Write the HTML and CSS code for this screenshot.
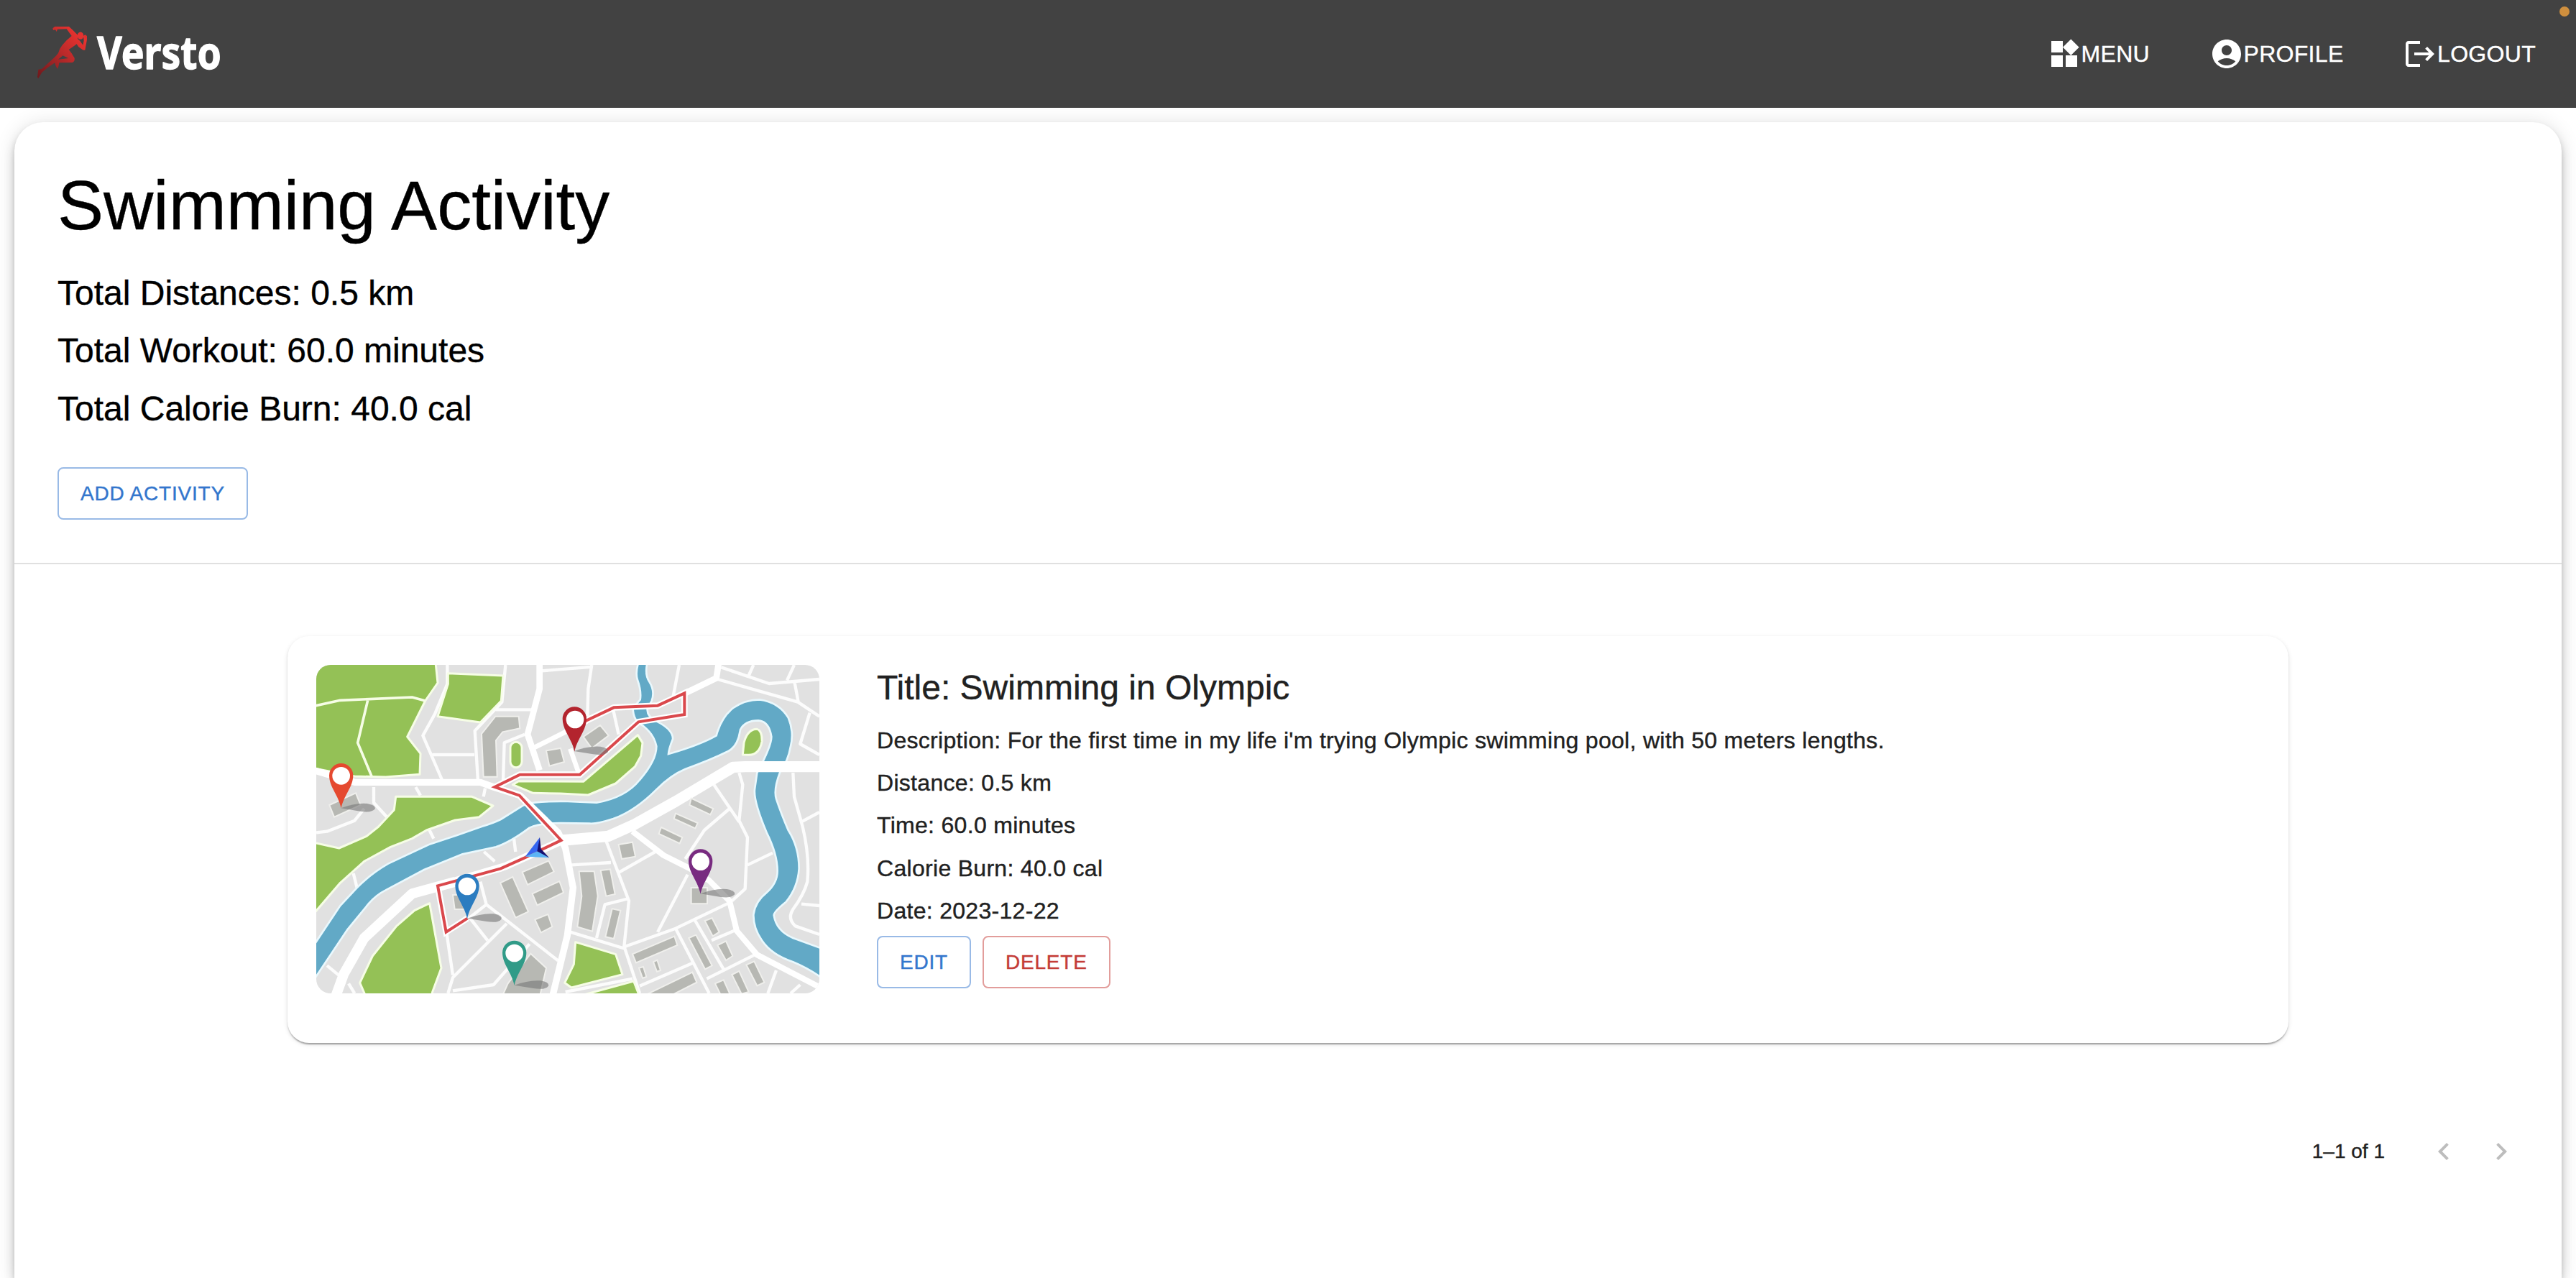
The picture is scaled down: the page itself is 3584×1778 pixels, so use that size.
FILE: index.html
```html
<!DOCTYPE html>
<html lang="en">
<head>
<meta charset="utf-8">
<title>Versto</title>
<link rel="stylesheet" href="styles.css">
</head>
<body>
<header class="topbar">
  <a class="brand">
    <svg class="brand-logo" viewBox="150 60 780 315" role="img" aria-label="Versto">
      <defs>
        <linearGradient id="runner" x1="0" y1="1" x2="1" y2="0">
          <stop offset="0" stop-color="#6d191c"/>
          <stop offset=".5" stop-color="#b92a2a"/>
          <stop offset=".85" stop-color="#e8322f"/>
          <stop offset="1" stop-color="#b92a2a"/>
        </linearGradient>
      </defs>
      <g fill="url(#runner)">
        <path fill-rule="evenodd" d="M220 118L229 111L288 111Q305 126 324 146L324 162Q336 170 346 188L350 170L348 150L355 145L363 150L363 165L355 209L347 209L328 196L320 184Q305 196 287 207Q300 222 311 242Q313 256 302 261L247 262Q246 272 241 287Q232 280 229 262Q200 280 175 302L160 327L156 322L160 290L174 288L218 248Q236 232 243 222Q246 205 260 188Q278 166 299 150L278 121L240 122L236 132L231 124L222 126ZM243 248L262 232L285 243Z"/>
      </g>
      <ellipse cx="336" cy="149" rx="13" ry="15.500" fill="#e23230"/>
      <text class="brand-name" x="405" y="287" textLength="519" lengthAdjust="spacingAndGlyphs">Versto</text>
    </svg>
  </a>
  <nav class="nav">
    <a class="nav-item"><svg class="icon" viewBox="0 0 24 24"><path d="M13 13v8h8v-8h-8zM3 21h8v-8H3v8zM3 3v8h8V3H3zm13.660-1.310L11 7.340 16.660 13l5.660-5.660-5.660-5.650z"/></svg><span>MENU</span></a>
    <a class="nav-item"><svg class="icon" viewBox="0 0 24 24"><path d="M12 2C6.480 2 2 6.480 2 12s4.480 10 10 10 10-4.480 10-10S17.520 2 12 2zm0 4c1.930 0 3.500 1.570 3.500 3.500S13.930 13 12 13s-3.500-1.570-3.500-3.500S10.070 6 12 6zm0 14c-2.030 0-4.430-.82-6.140-2.880C7.550 15.800 9.680 15 12 15s4.450.8 6.140 2.120C16.430 19.180 14.030 20 12 20z"/></svg><span>PROFILE</span></a>
    <a class="nav-item"><svg class="icon" viewBox="0 0 24 24"><path d="m17 7-1.410 1.410L18.170 11H8v2h10.170l-2.580 2.580L17 17l5-5zM4 5h8V3H4c-1.100 0-2 .9-2 2v14c0 1.100.9 2 2 2h8v-2H4V5z"/></svg><span>LOGOUT</span></a>
  </nav>
  <span class="status-dot"></span>
</header>

<main class="panel">
  <section class="summary">
    <h1 class="summary-title">Swimming Activity</h1>
    <p class="summary-line">Total Distances: 0.5 km</p>
    <p class="summary-line">Total Workout: 60.0 minutes</p>
    <p class="summary-line">Total Calorie Burn: 40.0 cal</p>
    <button class="btn btn-primary btn-add">ADD ACTIVITY</button>
  </section>

  <section class="list">
    <article class="card">
      <svg class="card-map" viewBox="0 0 2100 1371" preserveAspectRatio="none">
        <defs>
          <path id="pin" d="M0 137C-10 85-50 48-50 0A50 50 0 0 1 50 0C50 48 10 85 0 137Z"/>
          <path id="pin-shadow" d="M0 137Q60 114 110 118Q147 125 142 140Q130 158 80 150Z"/>
        </defs>
        <rect width="2100" height="1371" fill="#e1e1e1"/>

        <g class="map-street">
          <path d="M547 0V80L495 205L445 295L525 480M790 0L775 155L662 275L675 485M750 187H900M485 375H660M870 290L785 325L780 480"/>
          <path d="M940 25L1155 8M1150 0L1135 100L1132 215M1240 190L1262 290M1515 0L1490 130"/>
          <path d="M1690 10L1890 78L2100 60M1825 0L1805 45M1995 0L1965 65M1675 60L2010 155L2100 215M1997 75L2012 155M2060 200L2020 330L2100 375"/>
          <path d="M1990 450L1995 550L2030 675Q2060 800 2050 905Q2035 960 1990 1020Q1965 1060 2000 1090L2100 1125M2025 655L2100 615M2025 998L2100 1005"/>
          <path d="M1660 500L1765 655M1765 450L1780 500L1765 650L1800 720L1790 935L1735 985M1800 835L1905 785M1725 600L1620 690L1540 810"/>
          <path d="M1210 735L1305 985L1285 1175L1350 1371M1065 835L1230 825M1265 865L1415 780M1550 875L1425 1115M1290 1175L1500 1100L1720 995M1305 975L1205 1000L1170 1140M1060 1115L1290 1185"/>
          <path d="M1500 1100L1640 1371M1580 1065L1700 1270M1650 1150L1755 1105M1630 1310L1830 1210M1350 1340L1570 1245M1920 1275L1885 1371M2020 1335L1980 1371M1040 1365L1320 1310"/>
          <path d="M470 685L490 725M155 870L170 930M700 780L745 820M825 725L832 780M685 905L710 1000L1010 1235M710 1000L640 1055L715 1150M795 1080L570 1305L550 1371M545 1125L570 1295M570 1360L740 1335L890 1165M45 1255L100 1300M135 1330L160 1371"/>
          <path d="M240 510V575L295 635M415 510L435 545M705 515L698 550M0 700L45 695L160 650L200 600"/>
        </g>

        <g class="map-park">
          <path d="M0 -10H498L507 75L455 150L380 300L435 370L432 457L290 468L160 465L-10 432V-10Z"/>
          <path d="M-10 172L100 148L400 135L455 150M215 148L173 325L232 467"/>
          <path d="M550 35L780 45L772 150L685 240L507 215L550 80Z"/>
          <path d="M332 550H650L738 588L680 635L580 648L460 690L400 725L310 760L200 820L100 910L-10 1038V742L95 765L210 715L260 675L325 605Z"/>
          <path d="M473 995L410 1025L335 1090L235 1215L182 1327L205 1380H482L485 1365L522 1265Z"/>
          <path d="M1082 1157L1250 1208L1278 1292L1065 1347L1037 1327L1075 1250Z"/>
          <path d="M1120 1376L1325 1320L1350 1385Z"/>
          <path d="M820 500L845 485L1115 487L1342 293L1362 325L1355 380L1330 425L1250 495L1135 543L1020 537L905 535Z"/>
          <rect x="810" y="322" width="48" height="106" rx="24"/>
          <path d="M1780 375L1785 325Q1800 268 1840 268Q1862 275 1860 320Q1850 375 1805 376Z"/>
        </g>

        <path class="map-river" d="M-10 1170L100 1005L170 930Q230 870 300 830L470 750L590 710L690 675Q740 660 770 645L850 595Q880 575 910 575Q980 568 1050 570L1170 575Q1290 555 1350 480Q1420 400 1420 340Q1410 290 1365 255Q1322 235 1322 180L1352 145Q1358 110 1340 60Q1332 30 1345 -10H1382Q1370 40 1390 70Q1415 110 1400 150L1382 185Q1380 215 1420 235Q1490 270 1488 310Q1472 350 1470 372Q1600 335 1670 295Q1690 220 1740 180Q1790 145 1850 145Q1930 155 1970 220Q1995 280 1980 340Q1970 400 1935 450Q1908 520 1920 560Q1940 620 1970 690Q2015 760 2015 850Q2010 930 1960 990Q1910 1030 1910 1045Q1920 1110 1990 1140L2110 1184V1306Q2050 1265 1990 1240Q1900 1210 1860 1150Q1825 1100 1825 1045Q1830 990 1880 950Q1925 910 1925 860Q1925 790 1880 700Q1825 570 1830 520L1840 450Q1900 340 1900 300Q1890 235 1845 232Q1790 232 1770 270Q1760 340 1720 360Q1650 395 1540 435Q1480 460 1420 520Q1330 610 1240 642Q1170 665 1140 662L1020 660Q930 660 890 680Q810 740 750 760L610 790L450 855L290 940Q250 960 220 995L130 1105L-10 1314Z"/>

        <g class="map-road">
          <path stroke-width="28" d="M-10 440L160 490H685L740 510L850 545L1010 700L1040 765L1072 930L1048 1130L988 1375"/>
          <path stroke-width="42" d="M75 1400L115 1290L200 1140L400 955L580 905"/>
          <path stroke-width="32" d="M560 908L790 840L1030 732"/>
          <path stroke-width="46" d="M1030 732L1220 715L1330 665L1500 570L1740 427L1790 425H2110"/>
          <path stroke-width="26" d="M932 -10V100L882 290L932 440M1540 118L1670 55L1680 -10"/>
          <path stroke-width="20" d="M910 345L1040 280L1130 235M1060 350L1095 450"/>
          <path stroke-width="24" d="M1320 695L1450 795L1560 850L1640 900L1725 985L1755 1110L1840 1210L2120 1355"/>
          <path stroke-width="20" d="M745 510L850 458H1100L1345 238"/>
        </g>

        <g class="map-building">
          <path d="M690 288L748 215H845L850 265L778 280L750 315L755 467H698ZM960 358L1020 348L1035 405L973 422ZM1115 300L1185 252L1220 295L1150 348Z"/>
          <path d="M1565 557L1657 600L1645 625L1558 585ZM1500 620L1592 660L1582 682L1493 642ZM1440 678L1528 720L1517 745L1430 705ZM55 585L165 535L185 585L75 635Z"/>
          <path d="M570 960H630V1020H578ZM860 865L970 818L992 863L882 918ZM768 910L820 885L885 1030L832 1055ZM902 955L1015 903L1032 950L922 1003ZM913 1063L967 1041L985 1093L938 1117ZM895 1205L960 1265L935 1375H780L800 1330Z"/>
          <path d="M1262 750L1320 740L1332 800L1275 810ZM1097 862H1160L1175 965L1152 1112L1090 1093L1108 965ZM1187 858L1227 853L1247 957L1210 965ZM1235 1018L1270 1025L1242 1143L1207 1135ZM1565 930H1632V997H1565Z"/>
          <path d="M1320 1207L1495 1133L1507 1170L1335 1243ZM1347 1265L1365 1260L1378 1302L1362 1307ZM1407 1240L1423 1232L1437 1275L1422 1280ZM1555 1140L1585 1127L1652 1255L1623 1270ZM1622 1068L1652 1057L1682 1115L1655 1132ZM1675 1170L1710 1153L1738 1215L1710 1233Z"/>
          <path d="M1380 1375L1570 1283L1588 1325L1490 1375ZM1665 1330L1700 1315L1727 1375H1687ZM1735 1293L1765 1278L1805 1365L1775 1373ZM1795 1252L1828 1238L1870 1325L1840 1339Z"/>
        </g>

        <path class="map-route-edge" d="M631 1058L542 1115L507 922L770 850L870 805L1022 732L848 545L745 510L850 458H1100L1345 238L1537 207V118L1425 170L1242 178L1080 255"/>
        <path class="map-route" d="M631 1058L542 1115L507 922L770 850L870 805L1022 732L848 545L745 510L850 458H1100L1345 238L1537 207V118L1425 170L1242 178L1080 255"/>

        <path fill="#3565f0" d="M933 720L872 800L930 775Z"/>
        <path fill="#5bb4f5" d="M872 800L930 775L972 805Z"/>
        <path fill="#17106f" d="M933 720L922 778L972 805L938 768Z"/>

        <g fill="#777" fill-opacity=".6">
          <use href="#pin-shadow" x="103" y="461"/>
          <use href="#pin-shadow" x="1076" y="223"/>
          <use href="#pin-shadow" x="631" y="921"/>
          <use href="#pin-shadow" x="827" y="1200"/>
          <use href="#pin-shadow" x="1604" y="818"/>
        </g>
        <use href="#pin" x="104" y="461" fill="#e5492f"/>
        <use href="#pin" x="1078" y="225" fill="#b3242e"/>
        <use href="#pin" x="630" y="922" fill="#2b7cc0"/>
        <use href="#pin" x="827" y="1201" fill="#319b88"/>
        <use href="#pin" x="1604" y="819" fill="#782b80"/>
        <g fill="#fff">
          <circle cx="104" cy="463" r="37"/>
          <circle cx="1080" cy="228" r="37"/>
          <circle cx="630" cy="924" r="37"/>
          <circle cx="827" cy="1203" r="37"/>
          <circle cx="1604" cy="821" r="37"/>
        </g>
      </svg>
      <div class="card-body">
        <h2 class="card-title">Title: Swimming in Olympic</h2>
        <p class="card-line">Description: For the first time in my life i'm trying Olympic swimming pool, with 50 meters lengths.</p>
        <p class="card-line">Distance: 0.5 km</p>
        <p class="card-line">Time: 60.0 minutes</p>
        <p class="card-line">Calorie Burn: 40.0 cal</p>
        <p class="card-line">Date: 2023-12-22</p>
        <div class="card-actions">
          <button class="btn btn-primary">EDIT</button>
          <button class="btn btn-danger">DELETE</button>
        </div>
      </div>
    </article>

    <div class="pager">
      <span class="pager-label">1–1 of 1</span>
      <div class="pager-buttons">
        <button class="pager-btn" aria-label="Previous page"><svg class="icon" viewBox="0 0 24 24"><path d="M15.410 16.590 10.830 12l4.580-4.590L14 6l-6 6 6 6 1.410-1.410z"/></svg></button>
        <button class="pager-btn" aria-label="Next page"><svg class="icon" viewBox="0 0 24 24"><path d="M8.590 16.590 13.170 12 8.590 7.410 10 6l6 6-6 6-1.410-1.410z"/></svg></button>
      </div>
    </div>
  </section>
</main>
</body>
</html>
```
FILE: styles.css
```css
* { box-sizing: border-box; }

html { height: 100%; }

body {
  margin: 0;
  height: 100%;
  display: flex;
  flex-direction: column;
  background: #fff;
  color: #000;
  font-family: "Liberation Sans", Arial, sans-serif;
  -webkit-text-stroke: 0.4px currentColor;
}

h1, h2, p { margin: 0; font-weight: 400; }

.topbar {
  position: relative;
  flex: none;
  height: 150px;
  padding: 0 56px 0 50px;
  display: flex;
  align-items: center;
  justify-content: space-between;
  background: #424242;
  color: #fff;
}

.brand { display: flex; padding-bottom: 5px; }
.brand-logo { width: 260px; height: 105px; display: block; }
.brand-name {
  fill: #fff;
  stroke: #fff;
  stroke-width: 4px;
  stroke-linejoin: round;
  font-family: "Noto Sans", "Open Sans", sans-serif;
  font-weight: 700;
  font-size: 187px;
  -webkit-text-stroke: 4px #fff;
}

.nav { display: flex; gap: 82.5px; }
.nav-item {
  display: flex;
  align-items: center;
  font-size: 32px;
  line-height: 48px;
  letter-spacing: 0.3px;
}

.icon { width: 48px; height: 48px; display: block; fill: currentColor; }

.status-dot {
  position: absolute;
  top: 9px;
  right: 9px;
  width: 14px;
  height: 14px;
  border-radius: 50%;
  background: #cf8f3e;
}

.panel {
  flex: 1;
  margin: 20px 20px 0;
  border-radius: 40px 40px 0 0;
  background: #fff;
  box-shadow: 0 6px 10px -2px rgba(0, 0, 0, .2), 0 10px 16px rgba(0, 0, 0, .14), 0 2px 28px rgba(0, 0, 0, .12);
}

.summary {
  padding: 60px;
  border-bottom: 2px solid #e0e0e0;
}
.summary-title { font-size: 96px; line-height: 112px; margin-bottom: 33.6px; }
.summary-line { font-size: 48px; line-height: 64px; margin-bottom: 16.8px; }

.btn {
  height: 73px;
  padding: 0 30px;
  border: 2px solid;
  border-radius: 8px;
  background: transparent;
  font-family: inherit;
  font-size: 28px;
  letter-spacing: 0.8px;
  line-height: 49px;
}
.btn-primary { color: #3376cd; border-color: #99bae6; }
.btn-danger { color: #c43c37; border-color: #e29d9b; }
.btn-add { display: block; margin-top: 49px; }

.list {
  padding: 100px 44px 0;
  display: flex;
  flex-direction: column;
  align-items: center;
}

.card {
  width: 2784px;
  height: 566px;
  padding: 40px;
  display: flex;
  align-items: flex-start;
  gap: 80px;
  border-radius: 30px;
  background: #fff;
  color: #212121;
  box-shadow: 0 4px 2px -2px rgba(0, 0, 0, .2), 0 2px 2px rgba(0, 0, 0, .14), 0 2px 6px rgba(0, 0, 0, .12);
}
.card-map { flex: none; width: 700px; height: 457px; border-radius: 20px; display: block; }
.card-title { font-size: 48px; line-height: 64px; margin-bottom: 16.8px; }
.card-line { font-size: 32px; line-height: 48px; margin-bottom: 11.2px; letter-spacing: 0.3px; }
.card-actions { display: flex; gap: 16px; }

.map-street { fill: none; stroke: #fcfcfc; stroke-width: 13; stroke-linejoin: round; }
.map-park { fill: #94c156; stroke: #f6fde6; stroke-width: 9; stroke-linejoin: round; }
.map-park path:nth-child(2) { fill: none; stroke-width: 11; }
.map-river { fill: #62a9c6; stroke: #e9f8fd; stroke-width: 8; }
.map-road { fill: none; stroke: #fff; stroke-linejoin: round; }
.map-building { fill: #b7b8b3; stroke: #efefec; stroke-width: 6; }
.map-route-edge { fill: none; stroke: #fff; stroke-width: 26; }
.map-route { fill: none; stroke: #da484c; stroke-width: 12; }

.pager {
  align-self: flex-end;
  margin-top: 111px;
  display: flex;
  align-items: center;
  gap: 42px;
  color: #212121;
}
.pager-label { font-size: 28px; line-height: 40px; }
.pager-buttons { display: flex; }
.pager-btn { padding: 16px; border: 0; background: none; color: #bdbdbd; }
```
